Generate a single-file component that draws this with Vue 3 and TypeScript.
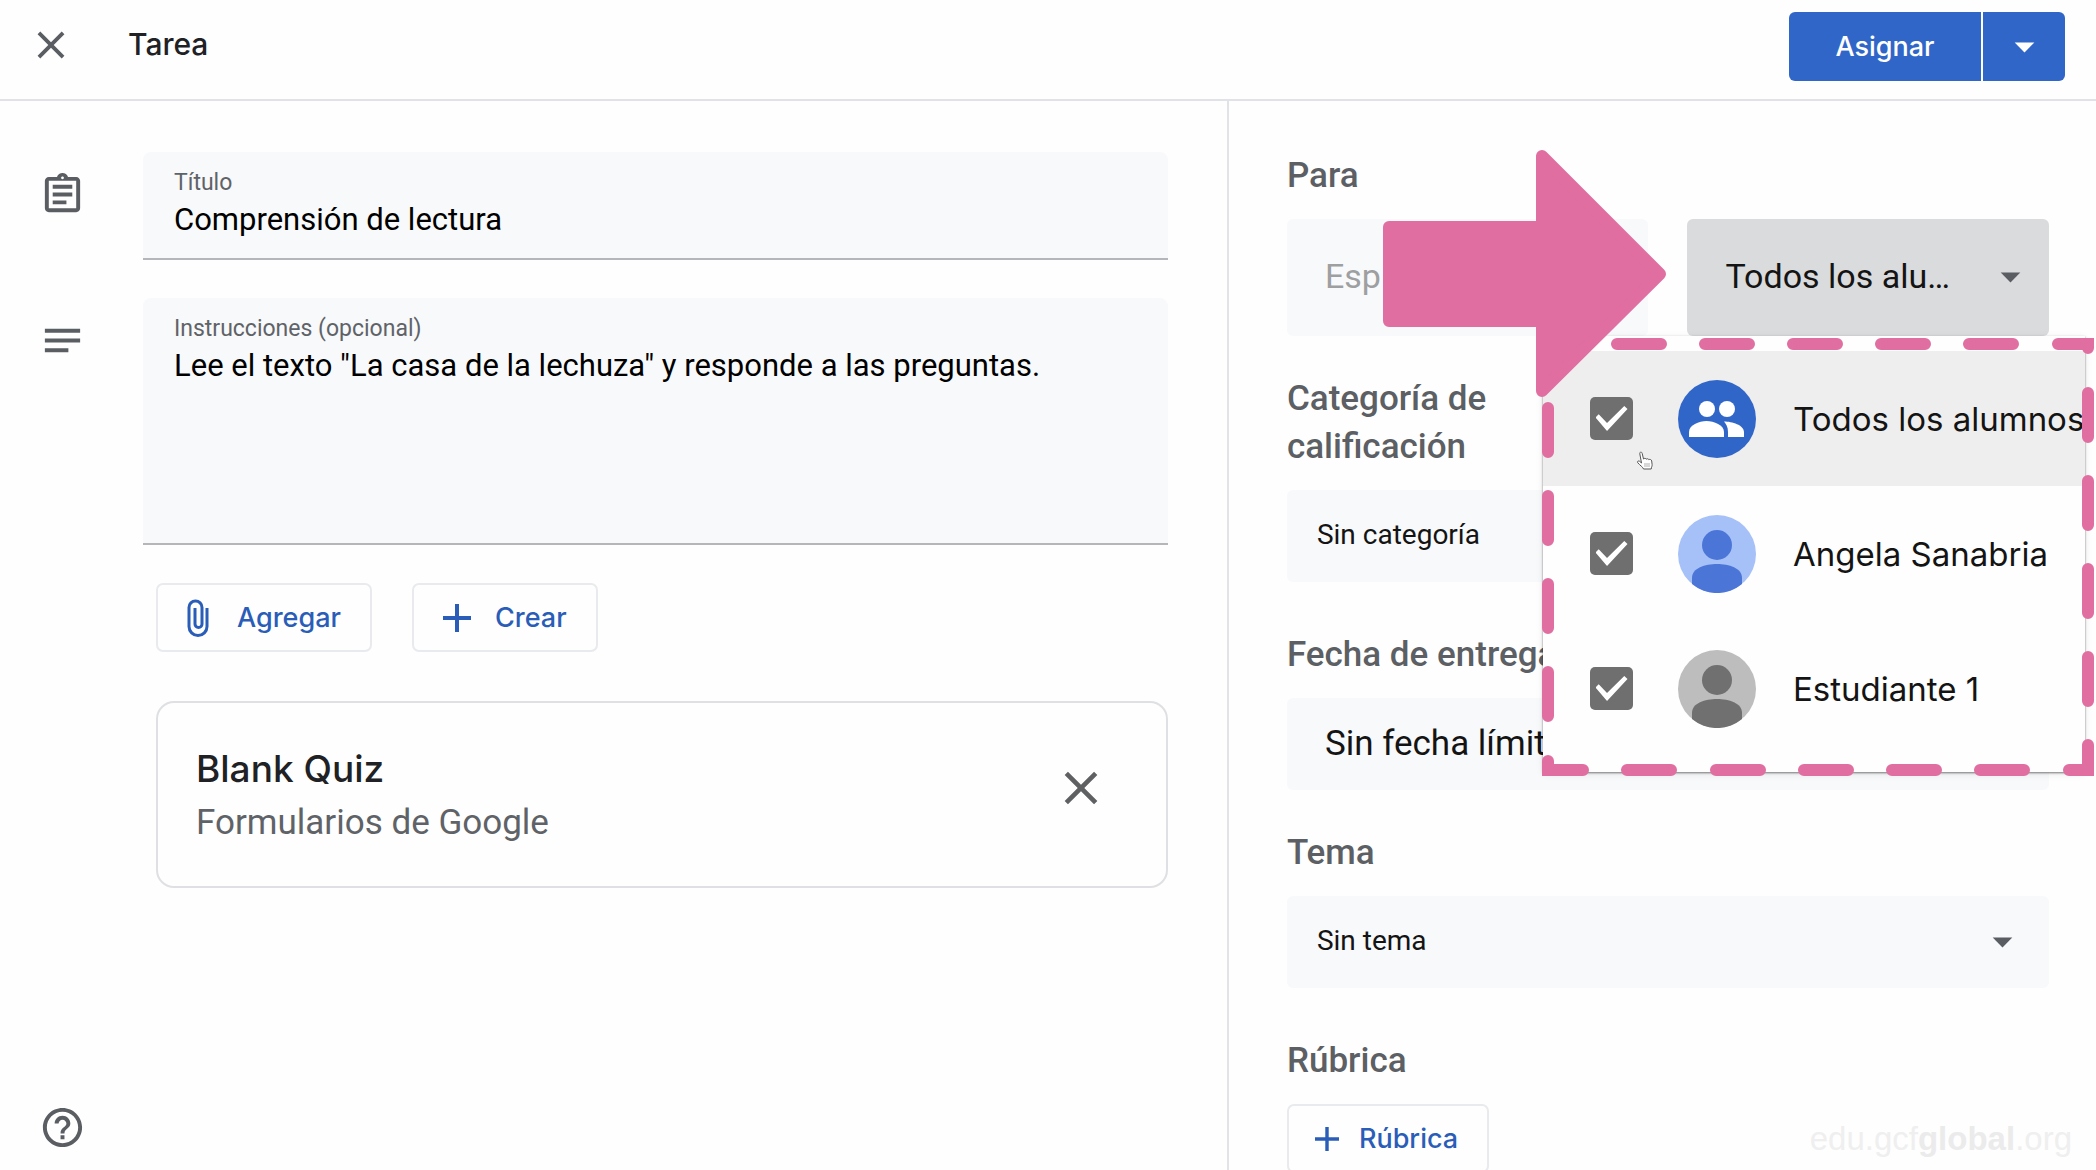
<script setup lang="ts">
import { ref } from 'vue'

interface Student {
  id: string
  name: string
  kind: 'group' | 'person'
  back: string
  fore: string
}

const title = ref('Comprensión de lectura')
const instructions = ref('Lee el texto "La casa de la lechuza" y responde a las preguntas.')
const category = ref('Sin categoría')
const topic = ref('Sin tema')
const course = ref('Esp')

const students: Student[] = [
  { id: 'all', name: 'Todos los alumnos', kind: 'group', back: '#3166c9', fore: '#ffffff' },
  { id: 'angela', name: 'Angela Sanabria', kind: 'person', back: '#a6c1f8', fore: '#4c75d8' },
  { id: 'student-1', name: 'Estudiante 1', kind: 'person', back: '#bdbdbd', fore: '#707070' },
]
const selected = ref<string[]>(students.map((s) => s.id))

// Round-capped strokes of the highlight frame, clockwise from the top edge.
const frameDashes: string = [
  ...[75, 163, 251, 339, 427].map((x) => `M${x} 6h44`),
  'M516 6H546V10',
  ...[55, 143, 231, 319].map((y) => `M546 ${y}v44`),
  'M546 407V432H527',
  ...[85, 174, 262, 350, 438].map((x) => `M${x} 432h44`),
  'M41 432H6V423',
  ...[70, 158, 246, 334].map((y) => `M6 ${y}v44`),
].join('')
</script>

<template>
  <div class="page">
    <header class="topbar">
      <button class="icon-button" type="button" aria-label="Cerrar">
        <svg class="icon-close" viewBox="0 0 24 24"><path d="M19 6.41 17.59 5 12 10.59 6.41 5 5 6.41 10.59 12 5 17.59 6.41 19 12 13.41 17.59 19 19 17.59 13.41 12z" /></svg>
      </button>
      <h1>Tarea</h1>
      <div class="assign">
        <button class="assign-main" type="button">Asignar</button>
        <button class="assign-more" type="button" aria-label="Más opciones">
          <svg class="icon" viewBox="0 0 24 24"><path d="M7 10l5 5 5-5z" /></svg>
        </button>
      </div>
    </header>

    <div class="columns">
      <main class="editor">
        <div class="line">
          <svg class="icon line-icon" viewBox="0 0 24 24"><path d="M7 15h7v2H7zm0-4h10v2H7zm0-4h10v2H7zm12-4h-4.180C14.400 1.840 13.300 1 12 1s-2.400.840-2.820 2H5c-1.100 0-2 .9-2 2v14c0 1.100.9 2 2 2h14c1.100 0 2-.9 2-2V5c0-1.100-.9-2-2-2zm-7-.25c.41 0 .75.34.75.75s-.34.75-.75.75-.75-.34-.75-.75.34-.75.75-.75zM19 19H5V5h14v14z" /></svg>
          <div class="field">
            <label for="title">Título</label>
            <input id="title" v-model="title" type="text" />
          </div>
        </div>
        <div class="line">
          <svg class="icon line-icon" viewBox="0 0 24 24"><path d="M3 18h12v-2H3v2zM3 6v2h18V6H3zm0 7h18v-2H3v2z" /></svg>
          <div class="field tall">
            <label for="instructions">Instrucciones (opcional)</label>
            <textarea id="instructions" v-model="instructions"></textarea>
          </div>
        </div>

        <div class="attachments">
          <div class="actions">
            <button class="outlined" type="button">
              <svg class="clip" viewBox="0 0 22 38"><path d="M20 9v18.500a9 9 0 0 1-18 0V8.500a6.500 6.500 0 0 1 13 0V25a3.500 3.500 0 0 1-7 0V9" /></svg>
              Agregar
            </button>
            <button class="outlined" type="button">
              <svg class="plus" viewBox="0 0 28 28"><path d="M14 0v28M0 14h28" /></svg>
              Crear
            </button>
          </div>
          <article class="card">
            <div>
              <h2>Blank Quiz</h2>
              <p>Formularios de Google</p>
            </div>
            <button class="icon-button remove" type="button" aria-label="Quitar">
              <svg class="icon-remove" viewBox="0 0 24 24"><path d="M19 6.41 17.59 5 12 10.59 6.41 5 5 6.41 10.59 12 5 17.59 6.41 19 12 13.41 17.59 19 19 17.59 13.41 12z" /></svg>
            </button>
          </article>
        </div>

        <button class="icon-button help" type="button" aria-label="Ayuda">
          <svg class="icon" viewBox="0 0 24 24"><path d="M11 18h2v-2h-2v2zm1-16C6.480 2 2 6.480 2 12s4.480 10 10 10 10-4.480 10-10S17.520 2 12 2zm0 18c-4.410 0-8-3.590-8-8s3.590-8 8-8 8 3.590 8 8-3.590 8-8 8zm0-14c-2.210 0-4 1.790-4 4h2c0-1.100.9-2 2-2s2 .9 2 2c0 2-3 1.750-3 5h2c0-2.250 3-2.500 3-5 0-2.210-1.790-4-4-4z" /></svg>
        </button>
      </main>

      <aside class="settings">
        <section class="group">
          <h3>Para</h3>
          <div class="audience">
            <select v-model="course" class="box large" aria-label="Clase" disabled>
              <option>Esp</option>
            </select>
            <button class="box large students" type="button" aria-haspopup="true" aria-expanded="true">
              <span>Todos los alu…</span>
              <svg class="icon" viewBox="0 0 24 24"><path d="M7 10l5 5 5-5z" /></svg>
            </button>

            <div class="menu">
              <label v-for="s in students" :key="s.id" class="student" :class="{ hovered: s.id === 'all' }">
                <input v-model="selected" type="checkbox" :value="s.id" />
                <svg class="avatar" viewBox="0 0 78 78">
                  <circle cx="39" cy="39" r="39" :fill="s.back" />
                  <g v-if="s.kind === 'group'" :fill="s.fore">
                    <circle cx="29" cy="29" r="8" />
                    <circle cx="49" cy="29" r="8" />
                    <path d="M11 57v-5c0-7 10-11 17.500-11S46 45 46 52v5z" />
                    <path d="M50 57v-5c0-5-2-8-4-10.500 8 0 20 3.500 20 10.500v5z" />
                  </g>
                  <g v-else :fill="s.fore">
                    <circle cx="39" cy="30" r="15" />
                    <path d="M14 69v-6c0-10 13-14 25-14s25 4 25 14v6a39 39 0 0 1-50 0z" />
                  </g>
                </svg>
                <span>{{ s.name }}</span>
              </label>
            </div>

            <svg class="frame" viewBox="0 0 552 438"><path :d="frameDashes" /></svg>
            <svg class="arrow" viewBox="0 0 283 247"><path d="M6 77H159V6L277 124 159 241V171H6z" /></svg>
            <svg class="pointer" viewBox="0 0 18 20"><path d="M5.500 12 3.800 2.800c-.3-2 2-2.300 2.400-.4L7.500 8c.8-1 2.500-.8 2.700.2.900-.8 2.400-.5 2.600.5 1-.7 2.700-.2 2.900 1.300l.4 3.500c.2 2-.8 2.500-.9 4.500H7.500c-.5-2-3.500-3.500-5.800-6.300-.9-1.300.8-2.300 2-1.400z" /><path class="cuff" d="M8 12h6v4H8z" /></svg>
          </div>
        </section>

        <section class="group">
          <h3><label for="category">Categoría de<br />calificación</label></h3>
          <div class="picker">
            <select id="category" v-model="category" class="box">
              <option>Sin categoría</option>
            </select>
            <svg class="icon" viewBox="0 0 24 24"><path d="M7 10l5 5 5-5z" /></svg>
          </div>
        </section>

        <section class="group spaced">
          <h3 id="due">Fecha de entrega</h3>
          <button class="box due" type="button" aria-labelledby="due">Sin fecha límite</button>
        </section>

        <section class="group">
          <h3><label for="topic">Tema</label></h3>
          <div class="picker">
            <select id="topic" v-model="topic" class="box">
              <option>Sin tema</option>
            </select>
            <svg class="icon" viewBox="0 0 24 24"><path d="M7 10l5 5 5-5z" /></svg>
          </div>
        </section>

        <section class="group spaced">
          <h3>Rúbrica</h3>
          <button class="outlined rubric" type="button">
            <svg class="plus" viewBox="0 0 28 28"><path d="M14 0v28M0 14h28" /></svg>
            Rúbrica
          </button>
        </section>
      </aside>
    </div>

    <p class="watermark">edu.gcf<b>global</b>.org</p>
  </div>
</template>

<style>
body {
  margin: 0;
  background: #fefefe;
}
</style>

<style scoped>
.page {
  position: relative;
  display: flex;
  flex-direction: column;
  height: 100vh;
  overflow: hidden;
  box-sizing: border-box;
  font-family: Roboto, "Liberation Sans", sans-serif;
  color: #202124;
}

.page *,
.page *::before {
  box-sizing: border-box;
}

h1,
h2,
h3,
p {
  margin: 0;
}

button,
input,
select,
textarea {
  margin: 0;
  padding: 0;
  border: 0;
  background: none;
  font: inherit;
  color: inherit;
  outline: none;
}

svg {
  display: block;
  flex: none;
}

.icon {
  width: 47px;
  height: 47px;
  fill: #5a5d61;
}

.icon-button {
  display: flex;
}

.icon-close {
  width: 46px;
  height: 46px;
  fill: #5a5d61;
}

.icon-remove {
  width: 56px;
  height: 56px;
  fill: #5f6062;
}

.topbar h1,
.assign,
.outlined,
.card h2,
.student {
  font-family: Inter, Roboto, sans-serif;
}

.topbar {
  display: flex;
  align-items: flex-start;
  flex: none;
  padding: 12px 31px 18px 28px;
  border-bottom: 2px solid #e0e2e7;
}

.topbar .icon-button {
  padding-top: 10px;
}

.topbar h1 {
  margin-left: 54px;
  padding-top: 12px;
  font-size: 30px;
  line-height: 40px;
  font-weight: 500;
}

.assign {
  display: flex;
  gap: 2px;
  margin-left: auto;
  font-size: 27px;
  font-weight: 500;
  color: #fff;
}

.assign-main {
  width: 192px;
  height: 69px;
  border-radius: 6px 0 0 6px;
  background: #3166c9;
}

.assign-more {
  display: flex;
  align-items: center;
  justify-content: center;
  width: 82px;
  height: 69px;
  border-radius: 0 6px 6px 0;
  background: #3166c9;
}

.assign-more .icon {
  fill: #fff;
}

.columns {
  display: grid;
  grid-template-columns: 24fr 17fr;
  grid-template-rows: minmax(0, 1fr);
  flex: 1;
  min-height: 0;
}

.editor {
  display: flex;
  flex-direction: column;
  gap: 38px;
  padding: 51px 59px 19px 39px;
}

.line {
  display: flex;
  align-items: flex-start;
  gap: 57px;
}

.line-icon {
  margin-top: 19px;
}

.field {
  display: flex;
  flex-direction: column;
  flex: 1;
  gap: 3px;
  height: 108px;
  padding: 17px 31px 0;
  border-bottom: 2px solid #b4b6ba;
  border-radius: 8px 8px 0 0;
  background: #f8f9fb;
}

.field.tall {
  height: 247px;
}

.field label {
  font-size: 23px;
  line-height: 28px;
  color: #5f6368;
}

.field input,
.field textarea {
  width: 100%;
  height: 40px;
  font-size: 31px;
  line-height: 40px;
  color: #000;
}

.field textarea {
  flex: 1;
  resize: none;
  overflow: hidden;
}

.attachments {
  display: flex;
  flex-direction: column;
  gap: 49px;
  margin-left: 117px;
}

.actions {
  display: flex;
  gap: 40px;
}

.outlined {
  display: flex;
  align-items: center;
  height: 69px;
  padding: 0 29px;
  border: 2px solid #e8eaed;
  border-radius: 7px;
  font-size: 27px;
  font-weight: 500;
  color: #2a5db8;
}

.clip {
  width: 22px;
  height: 38px;
  margin-right: 28px;
  fill: none;
  stroke: #2a5db8;
  stroke-width: 3;
}

.plus {
  width: 28px;
  height: 28px;
  margin-right: 24px;
  fill: none;
  stroke: #2a5db8;
  stroke-width: 4;
}

.card {
  display: flex;
  align-items: flex-start;
  justify-content: space-between;
  height: 187px;
  padding: 39px 57px 0 38px;
  border: 2px solid #dfe0e3;
  border-radius: 18px;
}

.card h2 {
  font-size: 37px;
  line-height: 54px;
  font-weight: 500;
}

.card p {
  font-size: 35px;
  line-height: 54px;
  color: #5f6368;
}

.remove {
  margin-top: 18px;
}

.help {
  margin-top: auto;
  align-self: flex-start;
}

.settings {
  padding: 50px 47px 0 58px;
  border-left: 2px solid #e2e3e6;
}

.group {
  margin-bottom: 38px;
}

.group:has(+ .spaced) {
  margin-bottom: 48px;
}

.group h3 {
  margin-bottom: 19px;
  padding-top: 1px;
  font-size: 35px;
  line-height: 48px;
  font-weight: 500;
  color: #5c5f63;
}

.box {
  display: block;
  width: 100%;
  height: 92px;
  padding: 0 30px 3px;
  appearance: none;
  border-radius: 6px;
  background: #f8f9fb;
  font-size: 28px;
  text-align: left;
  color: #141414;
}

.due {
  padding: 0 38px 1px;
  font-size: 35px;
}

.picker {
  position: relative;
}

.picker .icon {
  position: absolute;
  top: 22px;
  right: 23px;
  pointer-events: none;
}

.audience {
  position: relative;
  z-index: 1;
  display: grid;
  grid-template-columns: repeat(2, minmax(0, 1fr));
  gap: 39px;
}

.large {
  height: 117px;
  padding: 0 38px 3px;
  font-size: 34px;
}

.large:disabled {
  opacity: 1;
  color: #9e9fa1;
}

.students {
  display: flex;
  align-items: center;
  justify-content: space-between;
  padding-right: 15px;
  background: #dadbdd;
}

.menu {
  position: absolute;
  top: 117px;
  right: -36px;
  width: 542px;
  padding: 15px 0 16px;
  background: #fefefe;
  box-shadow: 0 1px 2px rgba(0, 0, 0, 0.5), 0 2px 8px rgba(0, 0, 0, 0.08);
}

.student {
  display: flex;
  align-items: center;
  height: 135px;
  padding-left: 47px;
  font-size: 33px;
  white-space: nowrap;
  color: #141414;
}

.student.hovered {
  background: #eeeeee;
}

.student input {
  display: grid;
  place-items: center;
  width: 43px;
  height: 43px;
  appearance: none;
  border-radius: 5px;
}

.student input:checked {
  background: #6f6f6f;
}

.student input:checked::before {
  content: "";
  width: 32px;
  height: 25px;
  background: #fff;
  clip-path: polygon(0 46%, 10% 33%, 36% 68%, 90% 0, 100% 12%, 36% 100%);
}

.avatar {
  width: 78px;
  height: 78px;
  margin: 0 37px 0 45px;
}

.frame {
  position: absolute;
  top: 119px;
  right: -45px;
  width: 552px;
  height: 438px;
  fill: none;
  stroke: #e06ea0;
  stroke-width: 12;
  stroke-linecap: round;
  pointer-events: none;
}

.arrow {
  position: absolute;
  top: -69px;
  right: 383px;
  width: 283px;
  height: 247px;
  fill: #e06ea0;
  stroke: #e06ea0;
  stroke-width: 12;
  stroke-linejoin: round;
  pointer-events: none;
}

.pointer {
  position: absolute;
  top: 232px;
  right: 395px;
  width: 18px;
  height: 20px;
  fill: #fff;
  stroke: #555;
  stroke-width: 1;
  pointer-events: none;
}

.cuff {
  fill: #d8d8d8;
  stroke: none;
}

.rubric {
  padding: 0 29px 0 26px;
}

.rubric .plus {
  width: 24px;
  height: 24px;
  margin-right: 20px;
}

.watermark {
  position: absolute;
  right: 24px;
  bottom: 11px;
  font-family: "Liberation Sans", sans-serif;
  font-size: 33px;
  line-height: 40px;
  color: #efefef;
}

.watermark b {
  font-weight: 700;
  color: #ebebeb;
}
</style>
